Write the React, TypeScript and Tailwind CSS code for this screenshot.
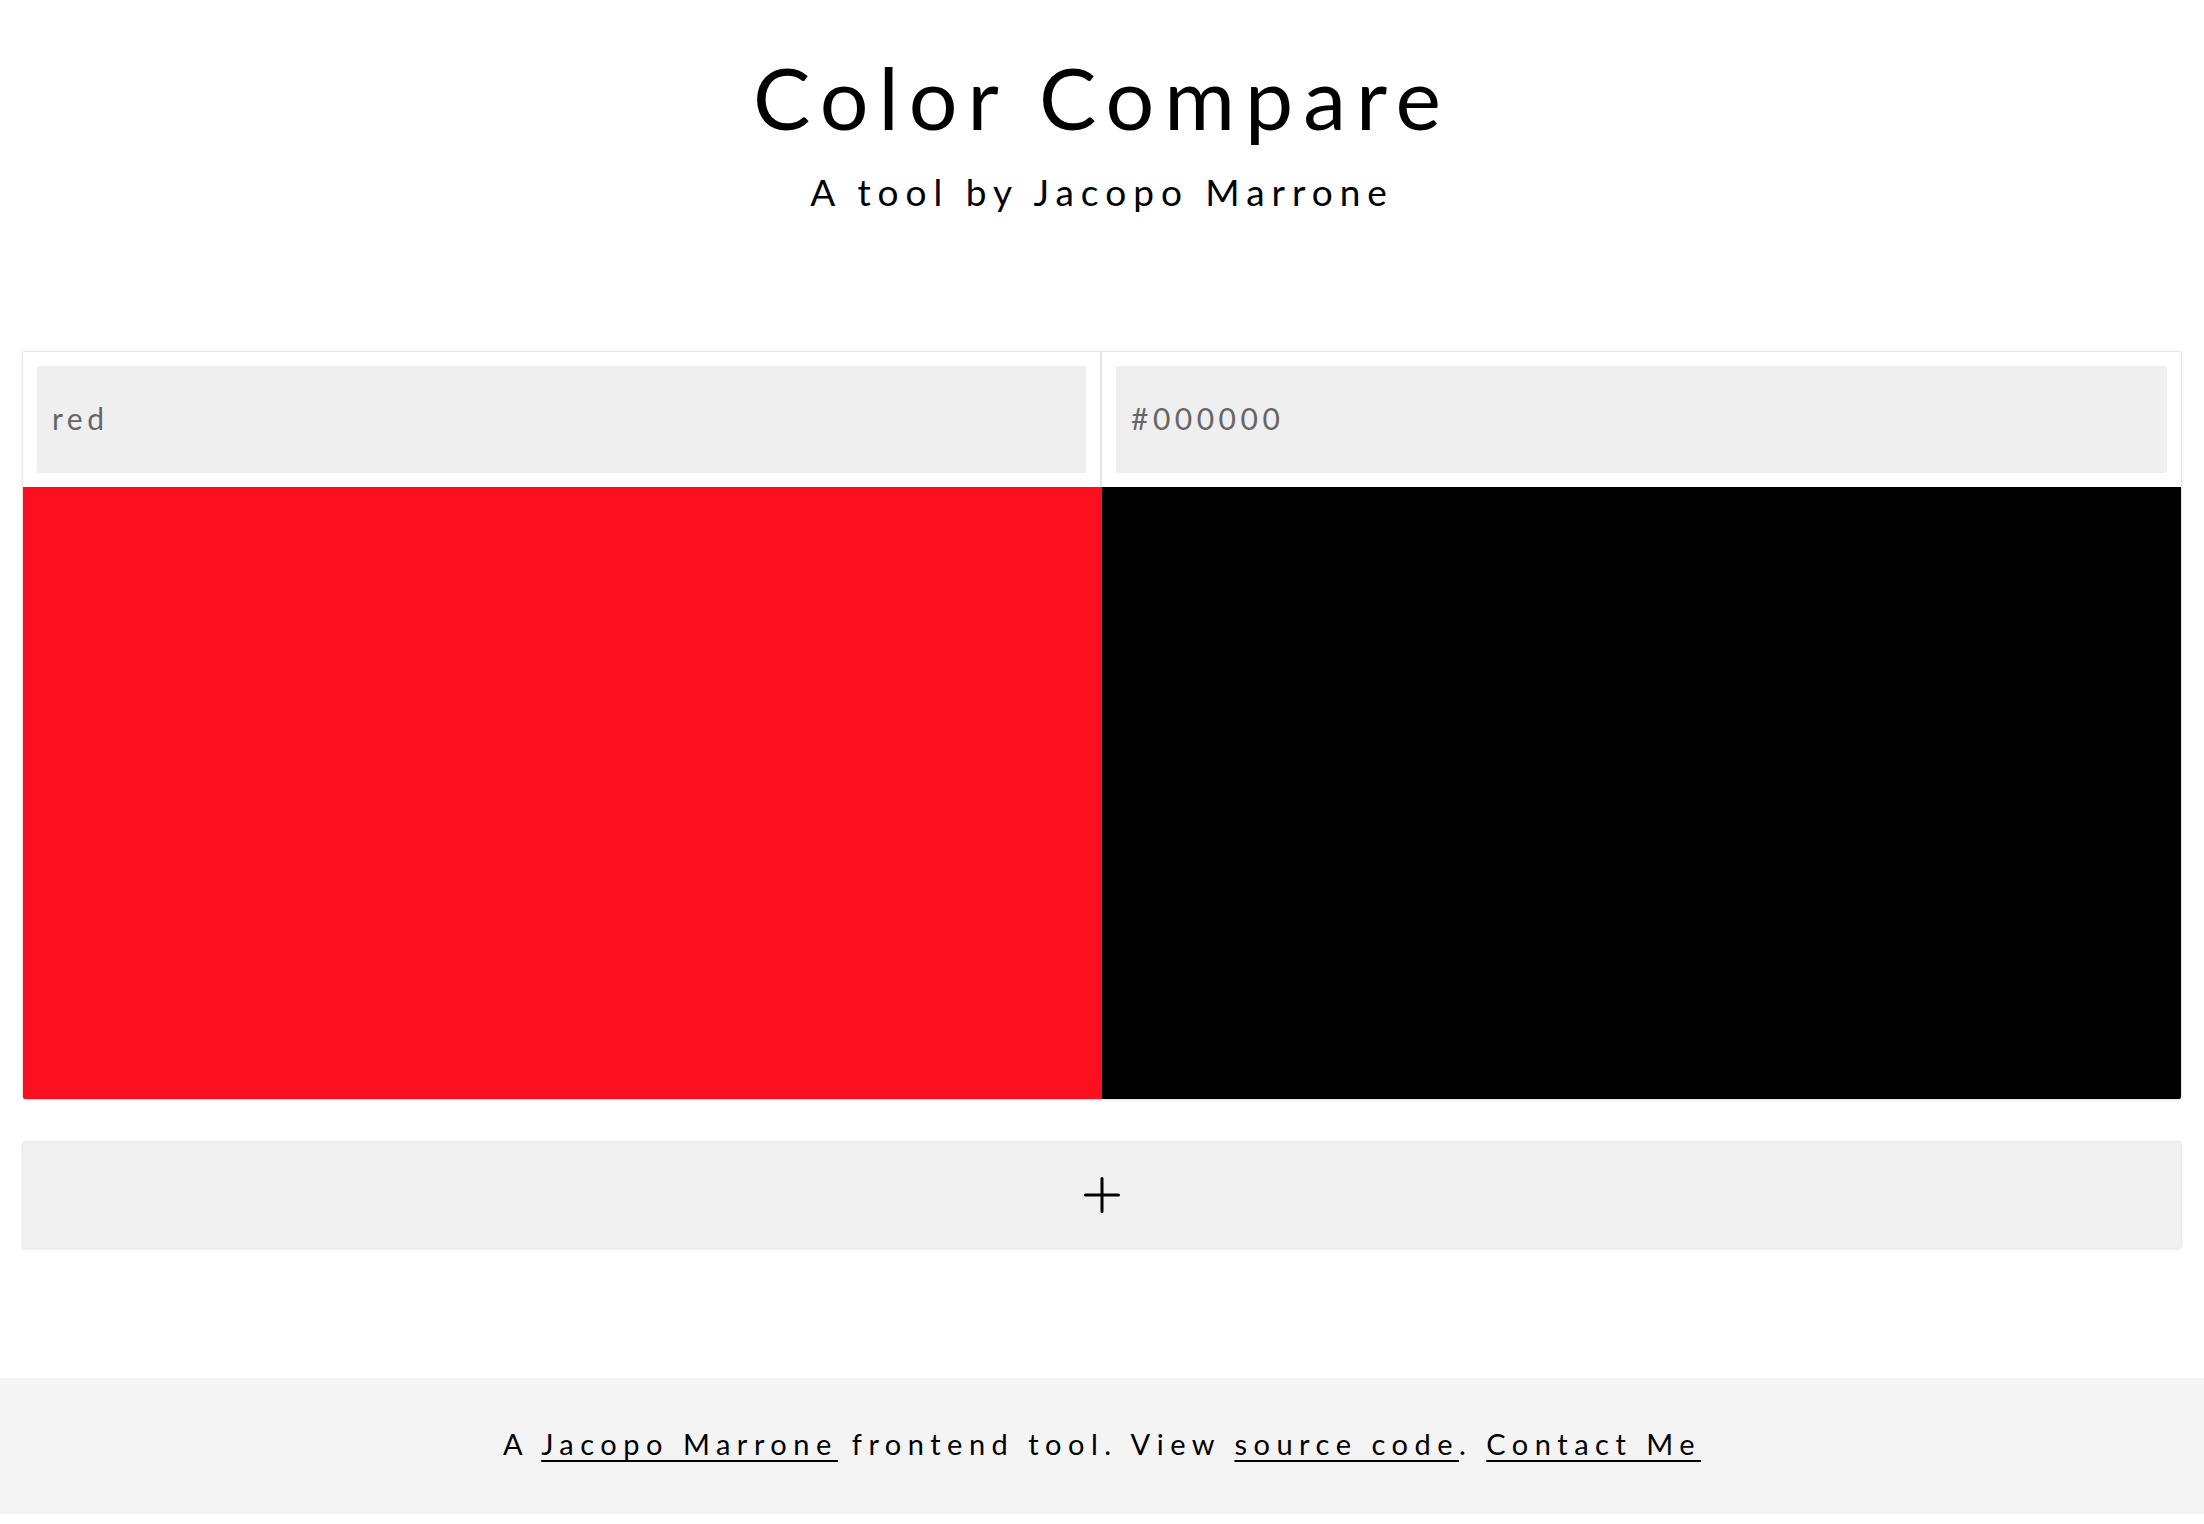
import React from "react";

function ColorColumn({ value, color, divider }: { value: string; color: string; divider?: boolean }) {
  return (
    <div className="flex-1 flex flex-col min-w-0">
      <div className={"p-[14px] " + (divider ? "border-r-2 border-[#e6e6e6]" : "")}>
        <div className="h-[107px] bg-[#efefef] rounded-[2px] flex items-center pl-[15px] pb-[3px]">
          <span className="text-[30px] leading-none tracking-[4.5px] text-[#666666]">{value}</span>
        </div>
      </div>
      <div className="h-[612px]" style={{ backgroundColor: color }} />
    </div>
  );
}

export default function App() {
  return (
    <div className="bg-white min-h-[1524px] flex flex-col font-['Lato',sans-serif] text-black">
      <header className="text-center">
        <h1 className="mt-[54px] text-[86px] leading-[86px] font-normal tracking-[10px]">Color Compare</h1>
        <p className="mt-[33px] text-[37px] leading-[37px] font-normal tracking-[7px]">A tool by Jacopo Marrone</p>
      </header>

      <main className="px-[22px] mt-[141px]">
        <div className="flex border border-[#e6e6e6] rounded-[3px] shadow-[0_0_3px_rgba(0,0,0,0.08)] overflow-hidden">
          <ColorColumn value="red" color="#fb0f1f" divider />
          <ColorColumn value="#000000" color="#000000" />
        </div>

        <button className="mt-[41px] w-full h-[108px] bg-[#f1f1f1] border border-[#e8e8e8] rounded-[4px] shadow-[0_1px_3px_rgba(0,0,0,0.08)] flex items-center justify-center">
          <svg width="36" height="36" viewBox="0 0 36 36" fill="none" stroke="#000" strokeWidth="3" strokeLinecap="round">
            <path d="M18 1.5v33M1.5 18h33" />
          </svg>
        </button>
      </main>

      <footer className="mt-[129px] mb-[10px] h-[136px] bg-[#f4f4f4] flex items-center justify-center">
        <p className="text-[29px] leading-[29px] tracking-[6.5px] font-normal pb-[6px]">
          A{" "}
          <a href="#" className="underline decoration-2 underline-offset-[5px]">Jacopo Marrone</a>
          {" "}frontend tool. View{" "}
          <a href="#" className="underline decoration-2 underline-offset-[5px]">source code</a>.{" "}
          <a href="#" className="underline decoration-2 underline-offset-[5px]">Contact Me</a>
        </p>
      </footer>
    </div>
  );
}
